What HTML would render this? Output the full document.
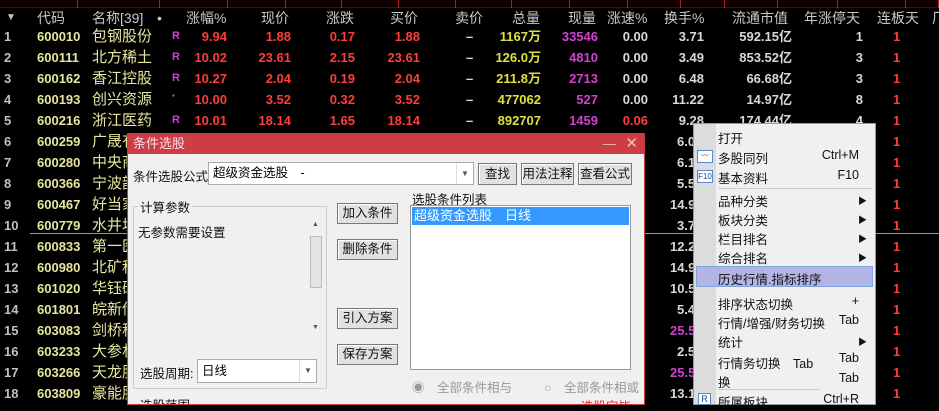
<!DOCTYPE html>
<html><head><meta charset="utf-8"><style>
*{margin:0;padding:0;box-sizing:border-box}
body{width:939px;height:405px;background:#000;overflow:hidden;position:relative;font-family:"Liberation Sans","Noto Sans CJK SC",sans-serif}
.a{position:absolute;white-space:nowrap}
.tabs{position:absolute;left:0;top:0;width:939px;height:8px;background:#100;border-bottom:1px solid #600}
.tabs i{position:absolute;top:0;height:8px;border-right:1px solid #a22}
.hd{color:#c8c8c8;font-size:14px;top:8px;line-height:20px}
.r{position:absolute;left:0;width:939px;height:21px;line-height:21px;font-size:13px;font-weight:bold}
.r span{position:absolute;white-space:nowrap}
.n{color:#c0c0c0;left:4px;width:18px}
.c{color:#e6e6a0;left:37px}
.nm{color:#e6e6a0;left:92px;font-weight:normal;font-size:15px}
.rd{color:#ff3c3c}.yl{color:#e0e040}.mg{color:#d040d0}.wh{color:#d8d8d8}
.dlg{position:absolute;left:127px;top:133px;width:518px;height:272px;background:#f0f0f0;border:1px solid #c03a40;overflow:hidden}
.tb{position:absolute;left:0;top:0;width:100%;height:20px;background:#cd3d44;color:#f8e0e0;font-size:13px;line-height:20px;padding-left:5px}
.d{position:absolute;font-size:12.5px;color:#111;white-space:nowrap}
.btn{position:absolute;background:#e1e1e1;border:1px solid #777;font-size:12.5px;text-align:center;color:#111;box-shadow:inset 1px 1px #fff}
.menu{position:absolute;left:693px;top:123px;width:183px;height:282px;background:#f0f0f0;border:1px solid #999}
.mi{position:absolute;left:24px;font-size:12.5px;color:#111;white-space:nowrap}
.sc{position:absolute;right:16px;font-size:12.5px;color:#111}
.ar{position:absolute;right:8px;font-size:9px;color:#111}
.sep{position:absolute;left:24px;right:3px;height:1px;background:#ccc}
</style></head><body>
<div class="tabs"><i style="left:0;width:78px"></i><i style="left:78px;width:82px"></i><i style="left:160px;width:68px"></i><i style="left:228px;width:58px"></i><i style="left:286px;width:56px"></i><i style="left:342px;width:57px"></i><i style="left:399px;width:57px"></i><i style="left:456px;width:56px"></i><i style="left:512px;width:58px"></i><i style="left:570px;width:58px"></i><i style="left:628px;width:53px"></i><i style="left:681px;width:44px"></i><i style="left:725px;width:53px"></i><i style="left:778px;width:60px"></i><i style="left:838px;width:68px"></i><i style="left:906px;width:33px"></i></div>
<div class="a hd" style="left:6px;font-size:10px">▼</div>
<div class="a hd" style="left:37px">代码</div>
<div class="a hd" style="left:92px">名称[39]</div>
<div class="a hd" style="left:157px">•</div>
<div class="a hd" style="left:186px">涨幅%</div>
<div class="a hd" style="left:261px">现价</div>
<div class="a hd" style="left:326px">涨跌</div>
<div class="a hd" style="left:390px">买价</div>
<div class="a hd" style="left:455px">卖价</div>
<div class="a hd" style="left:512px">总量</div>
<div class="a hd" style="left:568px">现量</div>
<div class="a hd" style="left:607px">涨速%</div>
<div class="a hd" style="left:664px">换手%</div>
<div class="a hd" style="left:732px">流通市值</div>
<div class="a hd" style="left:804px">年涨停天</div>
<div class="a hd" style="left:877px">连板天</div>
<div class="a hd" style="left:932px">厂</div>

<div class="r" style="top:26px"><span class="n">1</span><span class="c">600010</span><span class="nm">包钢股份</span><span class="mg" style="left:172px;font-size:11px">R</span><span class="rd" style="right:712px">9.94</span><span class="rd" style="right:648px">1.88</span><span class="rd" style="right:584px">0.17</span><span class="rd" style="right:519px">1.88</span><span class="wh" style="left:466px">–</span><span class="yl" style="right:398px">1167万</span><span class="mg" style="right:341px">33546</span><span class="wh" style="right:291px">0.00</span><span class="wh" style="right:235px">3.71</span><span class="wh" style="right:147px">592.15亿</span><span class="wh" style="right:76px">1</span><span class="rd" style="left:893px">1</span></div>
<div class="r" style="top:47px"><span class="n">2</span><span class="c">600111</span><span class="nm">北方稀土</span><span class="mg" style="left:172px;font-size:11px">R</span><span class="rd" style="right:712px">10.02</span><span class="rd" style="right:648px">23.61</span><span class="rd" style="right:584px">2.15</span><span class="rd" style="right:519px">23.61</span><span class="wh" style="left:466px">–</span><span class="yl" style="right:398px">126.0万</span><span class="mg" style="right:341px">4810</span><span class="wh" style="right:291px">0.00</span><span class="wh" style="right:235px">3.49</span><span class="wh" style="right:147px">853.52亿</span><span class="wh" style="right:76px">3</span><span class="rd" style="left:893px">1</span></div>
<div class="r" style="top:68px"><span class="n">3</span><span class="c">600162</span><span class="nm">香江控股</span><span class="mg" style="left:172px;font-size:11px">R</span><span class="rd" style="right:712px">10.27</span><span class="rd" style="right:648px">2.04</span><span class="rd" style="right:584px">0.19</span><span class="rd" style="right:519px">2.04</span><span class="wh" style="left:466px">–</span><span class="yl" style="right:398px">211.8万</span><span class="mg" style="right:341px">2713</span><span class="wh" style="right:291px">0.00</span><span class="wh" style="right:235px">6.48</span><span class="wh" style="right:147px">66.68亿</span><span class="wh" style="right:76px">3</span><span class="rd" style="left:893px">1</span></div>
<div class="r" style="top:89px"><span class="n">4</span><span class="c">600193</span><span class="nm">创兴资源</span><span class="mg" style="left:172px;font-size:8px;top:-4px">▪</span><span class="rd" style="right:712px">10.00</span><span class="rd" style="right:648px">3.52</span><span class="rd" style="right:584px">0.32</span><span class="rd" style="right:519px">3.52</span><span class="wh" style="left:466px">–</span><span class="yl" style="right:398px">477062</span><span class="mg" style="right:341px">527</span><span class="wh" style="right:291px">0.00</span><span class="wh" style="right:235px">11.22</span><span class="wh" style="right:147px">14.97亿</span><span class="wh" style="right:76px">8</span><span class="rd" style="left:893px">1</span></div>
<div class="r" style="top:110px"><span class="n">5</span><span class="c">600216</span><span class="nm">浙江医药</span><span class="mg" style="left:172px;font-size:11px">R</span><span class="rd" style="right:712px">10.01</span><span class="rd" style="right:648px">18.14</span><span class="rd" style="right:584px">1.65</span><span class="rd" style="right:519px">18.14</span><span class="wh" style="left:466px">–</span><span class="yl" style="right:398px">892707</span><span class="mg" style="right:341px">1459</span><span class="rd" style="right:291px">0.06</span><span class="wh" style="right:235px">9.28</span><span class="wh" style="right:147px">174.44亿</span><span class="wh" style="right:76px">4</span><span class="rd" style="left:893px">1</span></div>

<div class="r" style="top:131px"><span class="n">6</span><span class="c">600259</span><span class="nm">广晟有</span><span class="wh" style="left:677px">6.0</span><span class="rd" style="left:893px">1</span></div>
<div class="r" style="top:152px"><span class="n">7</span><span class="c">600280</span><span class="nm">中央商</span><span class="wh" style="left:677px">6.1</span><span class="rd" style="left:893px">1</span></div>
<div class="r" style="top:173px"><span class="n">8</span><span class="c">600366</span><span class="nm">宁波韵</span><span class="wh" style="left:677px">5.5</span><span class="rd" style="left:893px">1</span></div>
<div class="r" style="top:194px"><span class="n">9</span><span class="c">600467</span><span class="nm">好当家</span><span class="wh" style="left:670px">14.9</span><span class="rd" style="left:893px">1</span></div>
<div class="r" style="top:215px"><span class="n">10</span><span class="c">600779</span><span class="nm">水井坊</span><span class="wh" style="left:677px">3.7</span><span class="rd" style="left:893px">1</span></div>
<div class="a" style="left:30px;top:233px;width:909px;height:1px;background:#a0a040"></div>
<div class="r" style="top:236px"><span class="n">11</span><span class="c">600833</span><span class="nm">第一医</span><span class="wh" style="left:670px">12.2</span><span class="rd" style="left:893px">1</span></div>
<div class="r" style="top:257px"><span class="n">12</span><span class="c">600980</span><span class="nm">北矿科</span><span class="wh" style="left:670px">14.9</span><span class="rd" style="left:893px">1</span></div>
<div class="r" style="top:278px"><span class="n">13</span><span class="c">601020</span><span class="nm">华钰矿</span><span class="wh" style="left:670px">10.5</span><span class="rd" style="left:893px">1</span></div>
<div class="r" style="top:299px"><span class="n">14</span><span class="c">601801</span><span class="nm">皖新传</span><span class="wh" style="left:677px">5.4</span><span class="rd" style="left:893px">1</span></div>
<div class="r" style="top:320px"><span class="n">15</span><span class="c">603083</span><span class="nm">剑桥科</span><span class="mg" style="left:670px">25.5</span><span class="rd" style="left:893px">1</span></div>
<div class="r" style="top:341px"><span class="n">16</span><span class="c">603233</span><span class="nm">大参林</span><span class="wh" style="left:677px">2.5</span><span class="rd" style="left:893px">1</span></div>
<div class="r" style="top:362px"><span class="n">17</span><span class="c">603266</span><span class="nm">天龙股</span><span class="mg" style="left:670px">25.5</span><span class="rd" style="left:893px">1</span></div>
<div class="r" style="top:383px"><span class="n">18</span><span class="c">603809</span><span class="nm">豪能股</span><span class="wh" style="left:670px">13.1</span><span class="rd" style="left:893px">1</span></div>

<div class="dlg">
<div class="tb">条件选股<span style="position:absolute;right:28px;top:0;color:#f0c0c0">—</span><span style="position:absolute;right:6px;top:0;font-size:15px;color:#f0c0c0">✕</span></div>
<div class="d" style="left:5px;top:32px">条件选股公式</div>
<div class="a" style="left:80px;top:28px;width:266px;height:23px;background:#fff;border:1px solid #aaa;font-size:12.5px;line-height:21px;padding-left:4px">超级资金选股　-<span style="position:absolute;right:0;top:0;width:17px;height:21px;border-left:1px solid #ddd;font-size:8px;text-align:center;color:#555">▼</span></div>
<div class="btn" style="left:350px;top:29px;width:39px;height:22px;line-height:20px">查找</div>
<div class="btn" style="left:393px;top:29px;width:53px;height:22px;line-height:20px">用法注释</div>
<div class="btn" style="left:450px;top:29px;width:54px;height:22px;line-height:20px">查看公式</div>
<div class="a" style="left:5px;top:72px;width:194px;height:183px;border:1px solid #ccc"></div>
<div class="d" style="left:10px;top:63px;background:#f0f0f0;padding:0 2px">计算参数</div>
<div class="d" style="left:10px;top:88px">无参数需要设置</div>
<div class="a" style="left:181px;top:84px;width:14px;height:117px;background:#f0f0f0"><div style="position:absolute;left:1px;top:18px;width:12px;height:52px;background:#e4e4e4;border:1px solid #bbb"></div><div style="position:absolute;left:3px;top:3px;font-size:7px;color:#555">▲</div><div style="position:absolute;left:3px;top:106px;font-size:7px;color:#555">▼</div></div>
<div class="d" style="left:12px;top:229px">选股周期:</div>
<div class="a" style="left:69px;top:225px;width:120px;height:24px;background:#fff;border:1px solid #aaa;font-size:12.5px;line-height:22px;padding-left:4px">日线<span style="position:absolute;right:0;top:0;width:17px;height:22px;border-left:1px solid #ddd;font-size:8px;text-align:center;color:#555">▼</span></div>
<div class="a" style="left:5px;top:270px;width:194px;height:20px;border:1px solid #ccc"></div>
<div class="d" style="left:10px;top:261px;background:#f0f0f0;padding:0 2px">选股范围</div>
<div class="btn" style="left:209px;top:69px;width:61px;height:21px;line-height:19px">加入条件</div>
<div class="btn" style="left:209px;top:105px;width:61px;height:21px;line-height:19px">删除条件</div>
<div class="btn" style="left:209px;top:174px;width:61px;height:21px;line-height:19px">引入方案</div>
<div class="btn" style="left:209px;top:210px;width:61px;height:21px;line-height:19px">保存方案</div>
<div class="d" style="left:284px;top:55px">选股条件列表</div>
<div class="a" style="left:282px;top:71px;width:221px;height:165px;background:#fff;border:1px solid #999"><div style="position:absolute;left:1px;top:1px;right:1px;height:18px;background:#3399ff;color:#fff;font-size:13px;line-height:18px;padding-left:2px">超级资金选股　日线</div></div>
<div class="d" style="left:284px;top:243px;color:#999">◉　全部条件相与</div>
<div class="d" style="left:416px;top:243px;color:#999">○　全部条件相或</div>
<div class="d" style="left:453px;top:262px;color:#e03030">选股完毕</div>
</div>

<div class="menu">
<div class="a" style="left:0;top:0;width:22px;height:280px;background:#dcdcdc"></div>
<div class="mi" style="top:4px">打开</div>
<div class="a" style="left:3px;top:26px;width:16px;height:13px;border:1px solid #58c;background:#fff;font-size:8px;color:#c33;line-height:10px;text-align:center">〰</div>
<div class="mi" style="top:24px">多股同列</div><div class="sc" style="top:24px">Ctrl+M</div>
<div class="a" style="left:3px;top:46px;width:16px;height:13px;border:1px solid #58c;background:#fff;font-size:8px;color:#247;line-height:11px;text-align:center">F10</div>
<div class="mi" style="top:44px">基本资料</div><div class="sc" style="top:44px">F10</div>
<div class="sep" style="top:64px"></div>
<div class="mi" style="top:67px">品种分类</div><div class="ar" style="top:70px">▶</div>
<div class="mi" style="top:86px">板块分类</div><div class="ar" style="top:89px">▶</div>
<div class="mi" style="top:105px">栏目排名</div><div class="ar" style="top:108px">▶</div>
<div class="mi" style="top:124px">综合排名</div><div class="ar" style="top:127px">▶</div>
<div class="a" style="left:2px;top:142px;width:177px;height:21px;background:#b4b4e4;border:1px solid #7aa7e0"></div>
<div class="mi" style="top:145px">历史行情.指标排序</div>
<div class="mi" style="top:170px">排序状态切换</div><div class="sc" style="top:170px">+</div>
<div class="mi" style="top:189px">行情/增强/财务切换</div><div class="sc" style="top:189px">Tab</div>
<div class="mi" style="top:208px">统计</div><div class="ar" style="top:211px">▶</div>
<div class="mi" style="top:229px">行情务切换　Tab</div><div class="sc" style="top:227px">Tab</div>
<div class="mi" style="top:248px">换</div><div class="sc" style="top:247px">Tab</div>
<div class="sep" style="top:265px;right:55px"></div>
<div class="a" style="left:4px;top:269px;width:13px;height:12px;border:1px solid #58c;background:#fff;font-size:9px;color:#247;line-height:11px;text-align:center">R</div>
<div class="mi" style="top:268px">所属板块</div><div class="sc" style="top:268px">Ctrl+R</div>
</div>
</body></html>
